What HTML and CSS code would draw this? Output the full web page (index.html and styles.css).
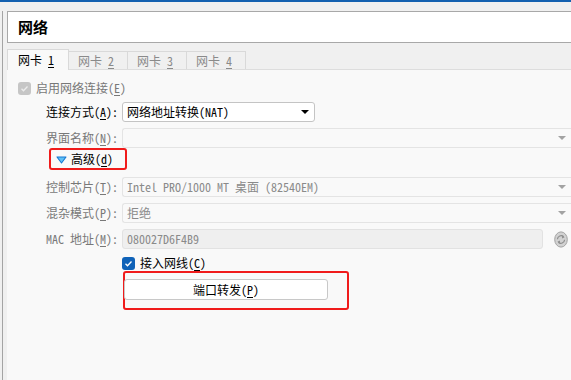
FILE: index.html
```html
<!DOCTYPE html>
<html lang="zh-CN">
<head>
    <meta charset="UTF-8">
    <meta name="viewport" content="width=device-width, initial-scale=1.0">
    <title>网络</title>
    <link rel="stylesheet" href="styles.css">
</head>
<body>
    <div class="topbar"></div>
    <div class="frame">
        <div class="title">网络</div>
        <div class="tabs">
            <div class="tab active">网卡 <u>1</u></div>
            <div class="tab">网卡 <u>2</u></div>
            <div class="tab">网卡 <u>3</u></div>
            <div class="tab">网卡 <u>4</u></div>
        </div>
        <div class="panel">
            <div class="fields">
                <div class="row check-row">
                    <span class="box off">
                        <svg width="13" height="13" viewBox="0 0 13 13"><path d="M3.5 6.8l2 2 4-4.3" fill="none" stroke="#ececec" stroke-width="1.3"/></svg>
                    </span>
                    <span class="muted">启用网络连接(<u>E</u>)</span>
                </div>

                <div class="row">
                    <span class="lbl">连接方式(<u>A</u>):</span>
                    <div class="select narrow">网络地址转换(NAT)<span class="arrow"></span></div>
                </div>
                <div class="row">
                    <span class="lbl muted">界面名称(<u>N</u>):</span>
                    <div class="select off"><span class="arrow"></span></div>
                </div>

                <div class="toggle">
                    <svg width="11" height="8" viewBox="0 0 11 8"><path d="M1 1h9L5.5 7z" fill="#5fc0f5" stroke="#1678d2" stroke-width="1.1" stroke-linejoin="round"/></svg>
                    <span>高级(<u>d</u>)</span>
                </div>

                <div class="row gap7">
                    <span class="lbl muted">控制芯片(<u>T</u>):</span>
                    <div class="select off">Intel PRO/1000 MT 桌面 (82540EM)<span class="arrow"></span></div>
                </div>
                <div class="row">
                    <span class="lbl muted">混杂模式(<u>P</u>):</span>
                    <div class="select off">拒绝<span class="arrow"></span></div>
                </div>
                <div class="row">
                    <span class="lbl muted">MAC 地址(<u>M</u>):</span>
                    <div class="input off">080027D6F4B9</div>
                    <span class="refresh">
                        <svg width="14" height="17" viewBox="0 0 14 17">
                            <ellipse cx="7" cy="8.5" rx="6.3" ry="7.6" fill="#d2d2d2" stroke="#a2a2a2"/>
                            <path d="M3.4 8.2a3.7 3.7 0 0 1 6.3-2.4M10.6 8.8a3.7 3.7 0 0 1-6.3 2.4" fill="none" stroke="#8e8e8e" stroke-width="1.2"/>
                            <path d="M8.2 4.6l2.4 1.6-2.6 1.2zM5.8 12.4l-2.4-1.6 2.6-1.2z" fill="#8e8e8e"/>
                        </svg>
                    </span>
                </div>

                <div class="row check-row on-row">
                    <span class="box on">
                        <svg width="13" height="13" viewBox="0 0 13 13"><path d="M3.5 6.8l2 2 4-4.3" fill="none" stroke="#fff" stroke-width="1.3"/></svg>
                    </span>
                    <span>接入网线(<u>C</u>)</span>
                </div>

                <div class="mark">
                    <button type="button">端口转发(<u>P</u>)</button>
                </div>
            </div>
        </div>
    </div>
</body>
</html>
```

FILE: styles.css
```css
body {
    margin: 0;
    background-color: #f0f0f0;
    color: #000;
    font-family: "Noto Sans Mono CJK SC", "Noto Sans CJK SC", sans-serif;
    font-size: 12px;
    line-height: 16px;
    overflow: hidden;
    height: 380px;
}
u {
    text-underline-offset: 2px;
}
.topbar {
    height: 2px;
    background-color: #1461b0;
}
.frame {
    margin: 9px 0 0 2px;
    height: 369px;
    padding-left: 4px;
    border-left: 1px solid #a4a4a4;
}
.title {
    height: 30px;
    padding-left: 10px;
    border: 1px solid #a8a8a8;
    border-right: none;
    background-color: #fff;
    font-family: "Noto Sans CJK SC", sans-serif;
    font-size: 15px;
    font-weight: bold;
    line-height: 30px;
}
.tabs {
    display: flex;
    align-items: flex-end;
    height: 26px;
    border-bottom: 1px solid #dddddd;
}
.tab {
    width: 49px;
    height: 17px;
    padding-left: 9px;
    border: 1px solid #d9d9d9;
    border-bottom: none;
    margin-left: -1px;
    color: #8a8a8a;
    line-height: 18px;
}
.tab.active {
    width: 50px;
    height: 20px;
    margin-left: 0;
    margin-bottom: -1px;
    padding-left: 10px;
    background-color: #f9f9f9;
    color: #000;
    line-height: 20px;
    position: relative;
    z-index: 1;
}
.panel {
    background-color: #f9f9f9;
    height: 310px;
}
.fields {
    padding-top: 10px;
}
.row {
    display: flex;
    align-items: center;
    height: 20px;
    margin-top: 6px;
}
.row.gap7 {
    margin-top: 7px;
}
.check-row {
    margin-top: 0;
    height: 16px;
    padding-left: 11px;
}
.on-row {
    margin-top: 7px;
    height: 14px;
    padding-left: 115px;
}
.box {
    width: 13px;
    height: 13px;
    border-radius: 3px;
    margin-right: 5px;
    display: flex;
}
.box.off {
    background-color: #c6c6c6;
}
.box.on {
    background-color: #0f62b8;
}
.muted {
    color: #787878;
}
.lbl {
    width: 111px;
    text-align: right;
    margin-right: 4px;
    flex-shrink: 0;
}
.select, .input {
    position: relative;
    height: 18px;
    padding-left: 4px;
    border: 1px solid #c4c4c4;
    border-radius: 3px;
    background-color: #fff;
    line-height: 18px;
    flex: 1;
    min-width: 0;
    white-space: nowrap;
    overflow: hidden;
}
.select.narrow {
    flex: none;
    width: 187px;
}
.select.off {
    border-color: #e4e4e4;
    border-right: none;
    border-radius: 3px 0 0 3px;
    background-color: #f9f9f9;
    color: #8a8a8a;
}
.input.off {
    border-color: #e2e2e2;
    background-color: #efefef;
    color: #8a8a8a;
}
.arrow {
    position: absolute;
    right: 5px;
    top: 7px;
    border-left: 4px solid transparent;
    border-right: 4px solid transparent;
    border-top: 4px solid #000;
}
.select.off .arrow {
    border-top-color: #a2a2a2;
}
.refresh {
    margin: 0 3px 0 11px;
    display: flex;
}
.toggle {
    display: flex;
    align-items: center;
    width: 70px;
    height: 18px;
    margin-left: 42px;
    padding-left: 4px;
    border: 2px solid #f01b1b;
    border-radius: 3px;
}
.toggle svg {
    margin: 1px 4px 0 1px;
}
.mark {
    width: 205px;
    height: 29px;
    margin: 1px 0 0 116px;
    padding: 6px 17px 0 0;
    border: 2px solid #f01b1b;
    border-radius: 3px;
}
button {
    display: block;
    width: 204px;
    height: 21px;
    margin-left: -1px;
    padding: 0;
    border: 1px solid #c8c8c8;
    border-radius: 3px;
    background-color: #fff;
    color: #000;
    font-family: inherit;
    font-size: 12px;
    line-height: 18px;
}
```
